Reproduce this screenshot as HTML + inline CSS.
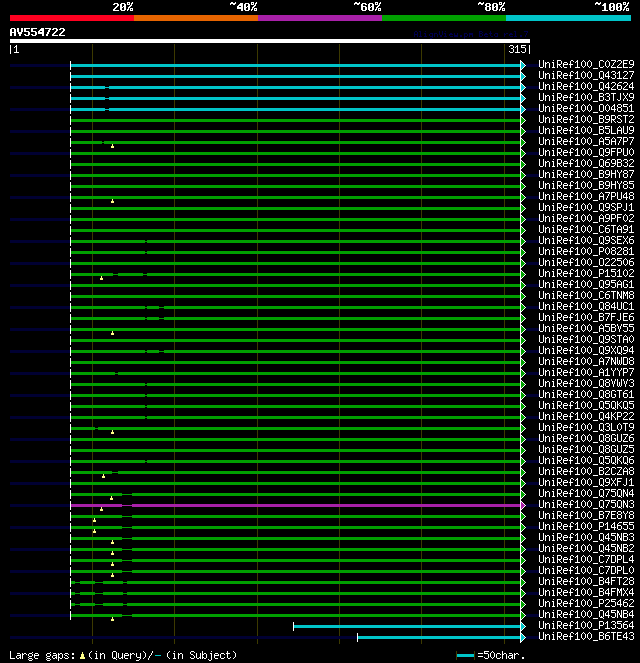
<!DOCTYPE html>
<html><head><meta charset="utf-8"><title>AlignView</title>
<style>
html,body{margin:0;padding:0;background:#000;}
svg{display:block}
body{font-family:"Liberation Mono",monospace;color:#fff}
rect,path,use{shape-rendering:crispEdges}
use{fill:#fff}
.c{fill:#00c4c8}.g{fill:#00a000}.p{fill:#a820a8}
</style></head><body>
<svg width="640" height="663" viewBox="0 0 640 663">
<rect x="0" y="0" width="640" height="663" fill="#000"/>
<defs><path id="tw" d="M520 -5h1v1h-1zM520 -4h1v1h-1zM520 -3h1v1h-1zM520 -2h1v1h-1zM520 -1h1v1h-1zM520 0h1v1h-1zM520 1h1v1h-1zM520 2h1v1h-1zM520 3h1v1h-1zM520 4h1v1h-1zM520 5h1v1h-1zM521 -4h1v1h-1zM521 4h1v1h-1zM522 -3h1v1h-1zM522 3h1v1h-1zM523 -2h1v1h-1zM523 2h1v1h-1zM524 -1h1v1h-1zM524 1h1v1h-1zM525 0h1v1h-1z"/><path id="tf" d="M521 -3h1v1h-1zM521 -2h2v1h-2zM521 -1h3v1h-3zM521 0h4v1h-4zM521 1h3v1h-3zM521 2h2v1h-2zM521 3h1v1h-1z"/>
<path id="uni" d="M0 0h1v1h-1zM4 0h1v1h-1zM0 1h1v1h-1zM4 1h1v1h-1zM0 2h1v1h-1zM4 2h1v1h-1zM0 3h1v1h-1zM4 3h1v1h-1zM0 4h1v1h-1zM4 4h1v1h-1zM0 5h1v1h-1zM4 5h1v1h-1zM0 6h1v1h-1zM4 6h1v1h-1zM1 7h3v1h-3zM6 2h1v1h-1zM8 2h2v1h-2zM6 3h2v1h-2zM10 3h1v1h-1zM6 4h1v1h-1zM10 4h1v1h-1zM6 5h1v1h-1zM10 5h1v1h-1zM6 6h1v1h-1zM10 6h1v1h-1zM6 7h1v1h-1zM10 7h1v1h-1zM14 0h1v1h-1zM13 2h2v1h-2zM14 3h1v1h-1zM14 4h1v1h-1zM14 5h1v1h-1zM14 6h1v1h-1zM13 7h3v1h-3zM18 0h4v1h-4zM18 1h1v1h-1zM22 1h1v1h-1zM18 2h1v1h-1zM22 2h1v1h-1zM18 3h1v1h-1zM22 3h1v1h-1zM18 4h4v1h-4zM18 5h1v1h-1zM20 5h1v1h-1zM18 6h1v1h-1zM21 6h1v1h-1zM18 7h1v1h-1zM22 7h1v1h-1zM25 2h3v1h-3zM24 3h1v1h-1zM28 3h1v1h-1zM24 4h5v1h-5zM24 5h1v1h-1zM24 6h1v1h-1zM25 7h3v1h-3zM32 0h2v1h-2zM31 1h1v1h-1zM34 1h1v1h-1zM31 2h1v1h-1zM31 3h1v1h-1zM30 4h4v1h-4zM31 5h1v1h-1zM31 6h1v1h-1zM31 7h1v1h-1zM38 0h1v1h-1zM37 1h2v1h-2zM36 2h1v1h-1zM38 2h1v1h-1zM38 3h1v1h-1zM38 4h1v1h-1zM38 5h1v1h-1zM38 6h1v1h-1zM36 7h5v1h-5zM44 0h1v1h-1zM43 1h1v1h-1zM45 1h1v1h-1zM42 2h1v1h-1zM46 2h1v1h-1zM42 3h1v1h-1zM46 3h1v1h-1zM42 4h1v1h-1zM46 4h1v1h-1zM42 5h1v1h-1zM46 5h1v1h-1zM43 6h1v1h-1zM45 6h1v1h-1zM44 7h1v1h-1zM50 0h1v1h-1zM49 1h1v1h-1zM51 1h1v1h-1zM48 2h1v1h-1zM52 2h1v1h-1zM48 3h1v1h-1zM52 3h1v1h-1zM48 4h1v1h-1zM52 4h1v1h-1zM48 5h1v1h-1zM52 5h1v1h-1zM49 6h1v1h-1zM51 6h1v1h-1zM50 7h1v1h-1zM54 8h5v1h-5z"/>
<path id="s28" d="M3 0h1v1h-1zM2 1h1v1h-1zM1 2h1v1h-1zM1 3h1v1h-1zM1 4h1v1h-1zM1 5h1v1h-1zM2 6h1v1h-1zM3 7h1v1h-1z"/>
<path id="s29" d="M1 0h1v1h-1zM2 1h1v1h-1zM3 2h1v1h-1zM3 3h1v1h-1zM3 4h1v1h-1zM3 5h1v1h-1zM2 6h1v1h-1zM1 7h1v1h-1z"/>
<path id="s2e" d="M2 6h2v1h-2zM2 7h2v1h-2z"/>
<path id="s2f" d="M4 0h1v1h-1zM4 1h1v1h-1zM3 2h1v1h-1zM3 3h1v1h-1zM2 4h1v1h-1zM1 5h1v1h-1zM1 6h1v1h-1zM0 7h1v1h-1zM0 8h1v1h-1z"/>
<path id="s30" d="M2 0h1v1h-1zM1 1h1v1h-1zM3 1h1v1h-1zM0 2h1v1h-1zM4 2h1v1h-1zM0 3h1v1h-1zM4 3h1v1h-1zM0 4h1v1h-1zM4 4h1v1h-1zM0 5h1v1h-1zM4 5h1v1h-1zM1 6h1v1h-1zM3 6h1v1h-1zM2 7h1v1h-1z"/>
<path id="s31" d="M2 0h1v1h-1zM1 1h2v1h-2zM0 2h1v1h-1zM2 2h1v1h-1zM2 3h1v1h-1zM2 4h1v1h-1zM2 5h1v1h-1zM2 6h1v1h-1zM0 7h5v1h-5z"/>
<path id="s32" d="M1 0h3v1h-3zM0 1h1v1h-1zM4 1h1v1h-1zM4 2h1v1h-1zM3 3h1v1h-1zM2 4h1v1h-1zM1 5h1v1h-1zM0 6h1v1h-1zM0 7h5v1h-5z"/>
<path id="s33" d="M1 0h3v1h-3zM0 1h1v1h-1zM4 1h1v1h-1zM4 2h1v1h-1zM2 3h2v1h-2zM4 4h1v1h-1zM4 5h1v1h-1zM0 6h1v1h-1zM4 6h1v1h-1zM1 7h3v1h-3z"/>
<path id="s34" d="M3 0h1v1h-1zM2 1h2v1h-2zM1 2h1v1h-1zM3 2h1v1h-1zM0 3h1v1h-1zM3 3h1v1h-1zM0 4h1v1h-1zM3 4h1v1h-1zM0 5h5v1h-5zM3 6h1v1h-1zM3 7h1v1h-1z"/>
<path id="s35" d="M0 0h5v1h-5zM0 1h1v1h-1zM0 2h4v1h-4zM4 3h1v1h-1zM4 4h1v1h-1zM4 5h1v1h-1zM0 6h1v1h-1zM4 6h1v1h-1zM1 7h3v1h-3z"/>
<path id="s36" d="M2 0h3v1h-3zM1 1h1v1h-1zM0 2h1v1h-1zM0 3h4v1h-4zM0 4h1v1h-1zM4 4h1v1h-1zM0 5h1v1h-1zM4 5h1v1h-1zM0 6h1v1h-1zM4 6h1v1h-1zM1 7h3v1h-3z"/>
<path id="s37" d="M0 0h5v1h-5zM4 1h1v1h-1zM3 2h1v1h-1zM3 3h1v1h-1zM2 4h1v1h-1zM2 5h1v1h-1zM1 6h1v1h-1zM1 7h1v1h-1z"/>
<path id="s38" d="M1 0h3v1h-3zM0 1h1v1h-1zM4 1h1v1h-1zM0 2h1v1h-1zM4 2h1v1h-1zM1 3h3v1h-3zM0 4h1v1h-1zM4 4h1v1h-1zM0 5h1v1h-1zM4 5h1v1h-1zM0 6h1v1h-1zM4 6h1v1h-1zM1 7h3v1h-3z"/>
<path id="s39" d="M1 0h3v1h-3zM0 1h1v1h-1zM4 1h1v1h-1zM0 2h1v1h-1zM4 2h1v1h-1zM0 3h1v1h-1zM4 3h1v1h-1zM1 4h4v1h-4zM4 5h1v1h-1zM3 6h1v1h-1zM0 7h3v1h-3z"/>
<path id="s3a" d="M2 2h2v1h-2zM2 3h2v1h-2zM2 6h2v1h-2zM2 7h2v1h-2z"/>
<path id="s3d" d="M0 2h5v1h-5zM0 5h5v1h-5z"/>
<path id="s41" d="M2 0h1v1h-1zM1 1h1v1h-1zM3 1h1v1h-1zM0 2h1v1h-1zM4 2h1v1h-1zM0 3h1v1h-1zM4 3h1v1h-1zM0 4h5v1h-5zM0 5h1v1h-1zM4 5h1v1h-1zM0 6h1v1h-1zM4 6h1v1h-1zM0 7h1v1h-1zM4 7h1v1h-1z"/>
<path id="s42" d="M0 0h4v1h-4zM0 1h1v1h-1zM4 1h1v1h-1zM0 2h1v1h-1zM4 2h1v1h-1zM0 3h4v1h-4zM0 4h1v1h-1zM4 4h1v1h-1zM0 5h1v1h-1zM4 5h1v1h-1zM0 6h1v1h-1zM4 6h1v1h-1zM0 7h4v1h-4z"/>
<path id="s43" d="M1 0h3v1h-3zM0 1h1v1h-1zM4 1h1v1h-1zM0 2h1v1h-1zM0 3h1v1h-1zM0 4h1v1h-1zM0 5h1v1h-1zM0 6h1v1h-1zM4 6h1v1h-1zM1 7h3v1h-3z"/>
<path id="s44" d="M0 0h4v1h-4zM0 1h1v1h-1zM4 1h1v1h-1zM0 2h1v1h-1zM4 2h1v1h-1zM0 3h1v1h-1zM4 3h1v1h-1zM0 4h1v1h-1zM4 4h1v1h-1zM0 5h1v1h-1zM4 5h1v1h-1zM0 6h1v1h-1zM4 6h1v1h-1zM0 7h4v1h-4z"/>
<path id="s45" d="M0 0h5v1h-5zM0 1h1v1h-1zM0 2h1v1h-1zM0 3h4v1h-4zM0 4h1v1h-1zM0 5h1v1h-1zM0 6h1v1h-1zM0 7h5v1h-5z"/>
<path id="s46" d="M0 0h5v1h-5zM0 1h1v1h-1zM0 2h1v1h-1zM0 3h4v1h-4zM0 4h1v1h-1zM0 5h1v1h-1zM0 6h1v1h-1zM0 7h1v1h-1z"/>
<path id="s47" d="M1 0h3v1h-3zM0 1h1v1h-1zM4 1h1v1h-1zM0 2h1v1h-1zM0 3h1v1h-1zM0 4h1v1h-1zM3 4h2v1h-2zM0 5h1v1h-1zM4 5h1v1h-1zM0 6h1v1h-1zM4 6h1v1h-1zM1 7h3v1h-3z"/>
<path id="s48" d="M0 0h1v1h-1zM4 0h1v1h-1zM0 1h1v1h-1zM4 1h1v1h-1zM0 2h1v1h-1zM4 2h1v1h-1zM0 3h5v1h-5zM0 4h1v1h-1zM4 4h1v1h-1zM0 5h1v1h-1zM4 5h1v1h-1zM0 6h1v1h-1zM4 6h1v1h-1zM0 7h1v1h-1zM4 7h1v1h-1z"/>
<path id="s4a" d="M3 0h1v1h-1zM3 1h1v1h-1zM3 2h1v1h-1zM3 3h1v1h-1zM3 4h1v1h-1zM3 5h1v1h-1zM0 6h1v1h-1zM3 6h1v1h-1zM1 7h2v1h-2z"/>
<path id="s4b" d="M0 0h1v1h-1zM4 0h1v1h-1zM0 1h1v1h-1zM3 1h1v1h-1zM0 2h1v1h-1zM2 2h1v1h-1zM0 3h2v1h-2zM0 4h1v1h-1zM2 4h1v1h-1zM0 5h1v1h-1zM3 5h1v1h-1zM0 6h1v1h-1zM4 6h1v1h-1zM0 7h1v1h-1zM4 7h1v1h-1z"/>
<path id="s4c" d="M0 0h1v1h-1zM0 1h1v1h-1zM0 2h1v1h-1zM0 3h1v1h-1zM0 4h1v1h-1zM0 5h1v1h-1zM0 6h1v1h-1zM0 7h5v1h-5z"/>
<path id="s4d" d="M0 0h1v1h-1zM4 0h1v1h-1zM0 1h2v1h-2zM3 1h2v1h-2zM0 2h2v1h-2zM3 2h2v1h-2zM0 3h1v1h-1zM2 3h1v1h-1zM4 3h1v1h-1zM0 4h1v1h-1zM2 4h1v1h-1zM4 4h1v1h-1zM0 5h1v1h-1zM4 5h1v1h-1zM0 6h1v1h-1zM4 6h1v1h-1zM0 7h1v1h-1zM4 7h1v1h-1z"/>
<path id="s4e" d="M0 0h1v1h-1zM4 0h1v1h-1zM0 1h2v1h-2zM4 1h1v1h-1zM0 2h2v1h-2zM4 2h1v1h-1zM0 3h1v1h-1zM2 3h1v1h-1zM4 3h1v1h-1zM0 4h1v1h-1zM2 4h1v1h-1zM4 4h1v1h-1zM0 5h1v1h-1zM3 5h2v1h-2zM0 6h1v1h-1zM3 6h2v1h-2zM0 7h1v1h-1zM4 7h1v1h-1z"/>
<path id="s4f" d="M1 0h3v1h-3zM0 1h1v1h-1zM4 1h1v1h-1zM0 2h1v1h-1zM4 2h1v1h-1zM0 3h1v1h-1zM4 3h1v1h-1zM0 4h1v1h-1zM4 4h1v1h-1zM0 5h1v1h-1zM4 5h1v1h-1zM0 6h1v1h-1zM4 6h1v1h-1zM1 7h3v1h-3z"/>
<path id="s50" d="M0 0h4v1h-4zM0 1h1v1h-1zM4 1h1v1h-1zM0 2h1v1h-1zM4 2h1v1h-1zM0 3h1v1h-1zM4 3h1v1h-1zM0 4h4v1h-4zM0 5h1v1h-1zM0 6h1v1h-1zM0 7h1v1h-1z"/>
<path id="s51" d="M1 0h3v1h-3zM0 1h1v1h-1zM4 1h1v1h-1zM0 2h1v1h-1zM4 2h1v1h-1zM0 3h1v1h-1zM4 3h1v1h-1zM0 4h1v1h-1zM4 4h1v1h-1zM0 5h1v1h-1zM4 5h1v1h-1zM0 6h1v1h-1zM2 6h1v1h-1zM4 6h1v1h-1zM1 7h3v1h-3zM4 8h1v1h-1z"/>
<path id="s52" d="M0 0h4v1h-4zM0 1h1v1h-1zM4 1h1v1h-1zM0 2h1v1h-1zM4 2h1v1h-1zM0 3h1v1h-1zM4 3h1v1h-1zM0 4h4v1h-4zM0 5h1v1h-1zM2 5h1v1h-1zM0 6h1v1h-1zM3 6h1v1h-1zM0 7h1v1h-1zM4 7h1v1h-1z"/>
<path id="s53" d="M1 0h3v1h-3zM0 1h1v1h-1zM4 1h1v1h-1zM0 2h1v1h-1zM1 3h2v1h-2zM3 4h1v1h-1zM4 5h1v1h-1zM0 6h1v1h-1zM4 6h1v1h-1zM1 7h3v1h-3z"/>
<path id="s54" d="M0 0h5v1h-5zM2 1h1v1h-1zM2 2h1v1h-1zM2 3h1v1h-1zM2 4h1v1h-1zM2 5h1v1h-1zM2 6h1v1h-1zM2 7h1v1h-1z"/>
<path id="s55" d="M0 0h1v1h-1zM4 0h1v1h-1zM0 1h1v1h-1zM4 1h1v1h-1zM0 2h1v1h-1zM4 2h1v1h-1zM0 3h1v1h-1zM4 3h1v1h-1zM0 4h1v1h-1zM4 4h1v1h-1zM0 5h1v1h-1zM4 5h1v1h-1zM0 6h1v1h-1zM4 6h1v1h-1zM1 7h3v1h-3z"/>
<path id="s56" d="M0 0h1v1h-1zM4 0h1v1h-1zM0 1h1v1h-1zM4 1h1v1h-1zM1 2h1v1h-1zM3 2h1v1h-1zM1 3h1v1h-1zM3 3h1v1h-1zM1 4h1v1h-1zM3 4h1v1h-1zM2 5h1v1h-1zM2 6h1v1h-1zM2 7h1v1h-1z"/>
<path id="s57" d="M0 0h1v1h-1zM4 0h1v1h-1zM0 1h1v1h-1zM4 1h1v1h-1zM0 2h1v1h-1zM4 2h1v1h-1zM0 3h1v1h-1zM2 3h1v1h-1zM4 3h1v1h-1zM0 4h1v1h-1zM2 4h1v1h-1zM4 4h1v1h-1zM0 5h1v1h-1zM2 5h1v1h-1zM4 5h1v1h-1zM0 6h1v1h-1zM2 6h1v1h-1zM4 6h1v1h-1zM1 7h1v1h-1zM3 7h1v1h-1z"/>
<path id="s58" d="M0 0h1v1h-1zM4 0h1v1h-1zM0 1h1v1h-1zM4 1h1v1h-1zM1 2h1v1h-1zM3 2h1v1h-1zM2 3h1v1h-1zM2 4h1v1h-1zM1 5h1v1h-1zM3 5h1v1h-1zM0 6h1v1h-1zM4 6h1v1h-1zM0 7h1v1h-1zM4 7h1v1h-1z"/>
<path id="s59" d="M0 0h1v1h-1zM4 0h1v1h-1zM0 1h1v1h-1zM4 1h1v1h-1zM1 2h1v1h-1zM3 2h1v1h-1zM2 3h1v1h-1zM2 4h1v1h-1zM2 5h1v1h-1zM2 6h1v1h-1zM2 7h1v1h-1z"/>
<path id="s5a" d="M0 0h5v1h-5zM4 1h1v1h-1zM3 2h1v1h-1zM2 3h1v1h-1zM2 4h1v1h-1zM1 5h1v1h-1zM0 6h1v1h-1zM0 7h5v1h-5z"/>
<path id="s61" d="M1 2h3v1h-3zM4 3h1v1h-1zM1 4h4v1h-4zM0 5h1v1h-1zM4 5h1v1h-1zM0 6h1v1h-1zM3 6h2v1h-2zM1 7h2v1h-2zM4 7h1v1h-1z"/>
<path id="s62" d="M0 0h1v1h-1zM0 1h1v1h-1zM0 2h1v1h-1zM2 2h2v1h-2zM0 3h2v1h-2zM4 3h1v1h-1zM0 4h1v1h-1zM4 4h1v1h-1zM0 5h1v1h-1zM4 5h1v1h-1zM0 6h2v1h-2zM4 6h1v1h-1zM0 7h1v1h-1zM2 7h2v1h-2z"/>
<path id="s63" d="M1 2h3v1h-3zM0 3h1v1h-1zM4 3h1v1h-1zM0 4h1v1h-1zM0 5h1v1h-1zM0 6h1v1h-1zM4 6h1v1h-1zM1 7h3v1h-3z"/>
<path id="s65" d="M1 2h3v1h-3zM0 3h1v1h-1zM4 3h1v1h-1zM0 4h5v1h-5zM0 5h1v1h-1zM0 6h1v1h-1zM1 7h3v1h-3z"/>
<path id="s67" d="M4 1h1v1h-1zM1 2h3v1h-3zM0 3h1v1h-1zM4 3h1v1h-1zM0 4h1v1h-1zM4 4h1v1h-1zM1 5h3v1h-3zM0 6h1v1h-1zM1 7h3v1h-3zM0 8h1v1h-1zM4 8h1v1h-1zM1 9h3v1h-3z"/>
<path id="s68" d="M0 0h1v1h-1zM0 1h1v1h-1zM0 2h1v1h-1zM2 2h2v1h-2zM0 3h2v1h-2zM4 3h1v1h-1zM0 4h1v1h-1zM4 4h1v1h-1zM0 5h1v1h-1zM4 5h1v1h-1zM0 6h1v1h-1zM4 6h1v1h-1zM0 7h1v1h-1zM4 7h1v1h-1z"/>
<path id="s69" d="M2 0h1v1h-1zM1 2h2v1h-2zM2 3h1v1h-1zM2 4h1v1h-1zM2 5h1v1h-1zM2 6h1v1h-1zM1 7h3v1h-3z"/>
<path id="s6a" d="M3 0h1v1h-1zM2 2h2v1h-2zM3 3h1v1h-1zM3 4h1v1h-1zM3 5h1v1h-1zM3 6h1v1h-1zM3 7h1v1h-1zM0 8h1v1h-1zM3 8h1v1h-1zM1 9h2v1h-2z"/>
<path id="s6e" d="M0 2h1v1h-1zM2 2h2v1h-2zM0 3h2v1h-2zM4 3h1v1h-1zM0 4h1v1h-1zM4 4h1v1h-1zM0 5h1v1h-1zM4 5h1v1h-1zM0 6h1v1h-1zM4 6h1v1h-1zM0 7h1v1h-1zM4 7h1v1h-1z"/>
<path id="s70" d="M0 2h1v1h-1zM2 2h2v1h-2zM0 3h2v1h-2zM4 3h1v1h-1zM0 4h1v1h-1zM4 4h1v1h-1zM0 5h1v1h-1zM4 5h1v1h-1zM0 6h2v1h-2zM4 6h1v1h-1zM0 7h1v1h-1zM2 7h2v1h-2zM0 8h1v1h-1zM0 9h1v1h-1z"/>
<path id="s72" d="M0 2h1v1h-1zM2 2h2v1h-2zM0 3h2v1h-2zM4 3h1v1h-1zM0 4h1v1h-1zM0 5h1v1h-1zM0 6h1v1h-1zM0 7h1v1h-1z"/>
<path id="s73" d="M1 2h3v1h-3zM0 3h1v1h-1zM4 3h1v1h-1zM1 4h2v1h-2zM3 5h1v1h-1zM0 6h1v1h-1zM4 6h1v1h-1zM1 7h3v1h-3z"/>
<path id="s74" d="M1 0h1v1h-1zM1 1h1v1h-1zM0 2h4v1h-4zM1 3h1v1h-1zM1 4h1v1h-1zM1 5h1v1h-1zM1 6h1v1h-1zM4 6h1v1h-1zM2 7h2v1h-2z"/>
<path id="s75" d="M0 2h1v1h-1zM4 2h1v1h-1zM0 3h1v1h-1zM4 3h1v1h-1zM0 4h1v1h-1zM4 4h1v1h-1zM0 5h1v1h-1zM4 5h1v1h-1zM0 6h1v1h-1zM3 6h2v1h-2zM1 7h2v1h-2zM4 7h1v1h-1z"/>
<path id="s79" d="M0 2h1v1h-1zM4 2h1v1h-1zM0 3h1v1h-1zM4 3h1v1h-1zM0 4h1v1h-1zM4 4h1v1h-1zM0 5h1v1h-1zM4 5h1v1h-1zM1 6h4v1h-4zM4 7h1v1h-1zM3 8h1v1h-1zM0 9h3v1h-3z"/>
<path id="s7c" d="M2 0h1v1h-1zM2 1h1v1h-1zM2 2h1v1h-1zM2 3h1v1h-1zM2 4h1v1h-1zM2 5h1v1h-1zM2 6h1v1h-1zM2 7h1v1h-1zM2 8h1v1h-1z"/>
<path id="b25" d="M0 -1h3v1h-3zM5 -1h1v1h-1zM0 0h1v1h-1zM2 0h1v1h-1zM4 0h2v1h-2zM0 1h3v1h-3zM4 1h1v1h-1zM3 2h2v1h-2zM2 3h2v1h-2zM1 4h2v1h-2zM1 5h1v1h-1zM3 5h3v1h-3zM0 6h2v1h-2zM3 6h1v1h-1zM5 6h1v1h-1zM0 7h1v1h-1zM3 7h3v1h-3z"/>
<path id="b30" d="M1 0h4v1h-4zM0 1h2v1h-2zM4 1h2v1h-2zM0 2h2v1h-2zM4 2h2v1h-2zM0 3h2v1h-2zM3 3h3v1h-3zM0 4h3v1h-3zM4 4h2v1h-2zM0 5h2v1h-2zM4 5h2v1h-2zM0 6h2v1h-2zM4 6h2v1h-2zM1 7h4v1h-4z"/>
<path id="b31" d="M2 0h2v1h-2zM1 1h3v1h-3zM0 2h4v1h-4zM2 3h2v1h-2zM2 4h2v1h-2zM2 5h2v1h-2zM2 6h2v1h-2zM0 7h6v1h-6z"/>
<path id="b32" d="M1 0h4v1h-4zM0 1h2v1h-2zM4 1h2v1h-2zM4 2h2v1h-2zM3 3h2v1h-2zM2 4h2v1h-2zM1 5h2v1h-2zM0 6h2v1h-2zM0 7h6v1h-6z"/>
<path id="b34" d="M3 0h3v1h-3zM2 1h4v1h-4zM1 2h5v1h-5zM0 3h2v1h-2zM4 3h2v1h-2zM0 4h6v1h-6zM0 5h6v1h-6zM4 6h2v1h-2zM4 7h2v1h-2z"/>
<path id="b35" d="M0 0h6v1h-6zM0 1h2v1h-2zM0 2h2v1h-2zM0 3h5v1h-5zM4 4h2v1h-2zM4 5h2v1h-2zM0 6h2v1h-2zM4 6h2v1h-2zM1 7h4v1h-4z"/>
<path id="b36" d="M1 0h4v1h-4zM0 1h2v1h-2zM4 1h2v1h-2zM0 2h2v1h-2zM0 3h5v1h-5zM0 4h2v1h-2zM4 4h2v1h-2zM0 5h2v1h-2zM4 5h2v1h-2zM0 6h2v1h-2zM4 6h2v1h-2zM1 7h4v1h-4z"/>
<path id="b37" d="M0 0h6v1h-6zM4 1h2v1h-2zM3 2h2v1h-2zM3 3h2v1h-2zM2 4h2v1h-2zM2 5h2v1h-2zM1 6h2v1h-2zM1 7h2v1h-2z"/>
<path id="b38" d="M1 0h4v1h-4zM0 1h2v1h-2zM4 1h2v1h-2zM0 2h2v1h-2zM4 2h2v1h-2zM1 3h4v1h-4zM0 4h2v1h-2zM4 4h2v1h-2zM0 5h2v1h-2zM4 5h2v1h-2zM0 6h2v1h-2zM4 6h2v1h-2zM1 7h4v1h-4z"/>
<path id="b41" d="M1 0h4v1h-4zM0 1h2v1h-2zM4 1h2v1h-2zM0 2h2v1h-2zM4 2h2v1h-2zM0 3h2v1h-2zM4 3h2v1h-2zM0 4h6v1h-6zM0 5h2v1h-2zM4 5h2v1h-2zM0 6h2v1h-2zM4 6h2v1h-2zM0 7h2v1h-2zM4 7h2v1h-2z"/>
<path id="b56" d="M0 0h2v1h-2zM4 0h2v1h-2zM0 1h2v1h-2zM4 1h2v1h-2zM0 2h2v1h-2zM4 2h2v1h-2zM0 3h2v1h-2zM4 3h2v1h-2zM1 4h4v1h-4zM1 5h4v1h-4zM2 6h2v1h-2zM2 7h2v1h-2z"/>
<path id="b7e" d="M1 -1h2v1h-2zM5 -1h1v1h-1zM0 0h6v1h-6zM0 1h1v1h-1zM3 1h2v1h-2z"/></defs>
<rect x="10" y="15" width="124" height="6" fill="#ff0020"/>
<rect x="134" y="15" width="124" height="6" fill="#e66400"/>
<rect x="258" y="15" width="124" height="6" fill="#a820a8"/>
<rect x="382" y="15" width="124" height="6" fill="#00a000"/>
<rect x="506" y="15" width="125" height="6" fill="#00c4c8"/>
<use href="#b32" x="113" y="3"/>
<use href="#b30" x="120" y="3"/>
<use href="#b25" x="127" y="3"/>
<use href="#b7e" x="230" y="3"/>
<use href="#b34" x="237" y="3"/>
<use href="#b30" x="244" y="3"/>
<use href="#b25" x="251" y="3"/>
<use href="#b7e" x="354" y="3"/>
<use href="#b36" x="361" y="3"/>
<use href="#b30" x="368" y="3"/>
<use href="#b25" x="375" y="3"/>
<use href="#b7e" x="478" y="3"/>
<use href="#b38" x="485" y="3"/>
<use href="#b30" x="492" y="3"/>
<use href="#b25" x="499" y="3"/>
<use href="#b7e" x="595" y="3"/>
<use href="#b31" x="602" y="3"/>
<use href="#b30" x="609" y="3"/>
<use href="#b30" x="616" y="3"/>
<use href="#b25" x="623" y="3"/>
<use href="#b41" x="10" y="28"/>
<use href="#b56" x="17" y="28"/>
<use href="#b35" x="24" y="28"/>
<use href="#b35" x="31" y="28"/>
<use href="#b34" x="38" y="28"/>
<use href="#b37" x="45" y="28"/>
<use href="#b32" x="52" y="28"/>
<use href="#b32" x="59" y="28"/>
<path d="M415 31h2v1h-2zM414 32h1v1h-1zM417 32h1v1h-1zM414 33h1v1h-1zM417 33h1v1h-1zM414 34h4v1h-4zM414 35h1v1h-1zM417 35h1v1h-1zM414 36h1v1h-1zM417 36h1v1h-1zM419 31h2v1h-2zM420 32h1v1h-1zM420 33h1v1h-1zM420 34h1v1h-1zM420 35h1v1h-1zM419 36h3v1h-3zM425 31h1v1h-1zM424 33h2v1h-2zM425 34h1v1h-1zM425 35h1v1h-1zM424 36h3v1h-3zM430 33h3v1h-3zM429 34h1v1h-1zM432 34h1v1h-1zM429 35h1v1h-1zM432 35h1v1h-1zM430 36h3v1h-3zM432 37h1v1h-1zM430 38h2v1h-2zM434 33h3v1h-3zM434 34h1v1h-1zM437 34h1v1h-1zM434 35h1v1h-1zM437 35h1v1h-1zM434 36h1v1h-1zM437 36h1v1h-1zM439 31h1v1h-1zM442 31h1v1h-1zM439 32h1v1h-1zM442 32h1v1h-1zM439 33h1v1h-1zM442 33h1v1h-1zM439 34h1v1h-1zM442 34h1v1h-1zM440 35h2v1h-2zM440 36h2v1h-2zM445 31h1v1h-1zM444 33h2v1h-2zM445 34h1v1h-1zM445 35h1v1h-1zM444 36h3v1h-3zM450 33h2v1h-2zM449 34h4v1h-4zM449 35h1v1h-1zM450 36h3v1h-3zM454 33h1v1h-1zM457 33h1v1h-1zM454 34h1v1h-1zM457 34h1v1h-1zM454 35h4v1h-4zM454 36h4v1h-4zM460 35h2v1h-2zM460 36h2v1h-2zM464 33h3v1h-3zM464 34h1v1h-1zM467 34h1v1h-1zM464 35h1v1h-1zM467 35h1v1h-1zM464 36h3v1h-3zM464 37h1v1h-1zM464 38h1v1h-1zM469 33h4v1h-4zM469 34h4v1h-4zM469 35h1v1h-1zM472 35h1v1h-1zM469 36h1v1h-1zM472 36h1v1h-1zM479 31h3v1h-3zM479 32h1v1h-1zM482 32h1v1h-1zM479 33h3v1h-3zM479 34h1v1h-1zM482 34h1v1h-1zM479 35h1v1h-1zM482 35h1v1h-1zM479 36h3v1h-3zM485 33h2v1h-2zM484 34h4v1h-4zM484 35h1v1h-1zM485 36h3v1h-3zM490 31h1v1h-1zM490 32h1v1h-1zM489 33h3v1h-3zM490 34h1v1h-1zM490 35h1v1h-1zM491 36h2v1h-2zM495 33h3v1h-3zM494 34h1v1h-1zM497 34h1v1h-1zM494 35h1v1h-1zM497 35h1v1h-1zM495 36h3v1h-3zM504 33h1v1h-1zM506 33h2v1h-2zM504 34h2v1h-2zM504 35h1v1h-1zM504 36h1v1h-1zM510 33h2v1h-2zM509 34h4v1h-4zM509 35h1v1h-1zM510 36h3v1h-3zM514 31h2v1h-2zM515 32h1v1h-1zM515 33h1v1h-1zM515 34h1v1h-1zM515 35h1v1h-1zM514 36h3v1h-3zM520 35h2v1h-2zM520 36h2v1h-2zM524 31h4v1h-4zM527 32h1v1h-1zM526 33h1v1h-1zM526 34h1v1h-1zM525 35h1v1h-1zM525 36h1v1h-1z" fill="#00004c"/>
<rect x="10" y="39" width="520" height="4" fill="#fff"/>
<use href="#s7c" x="8" y="45"/>
<use href="#s31" x="14" y="45"/>
<use href="#s33" x="509" y="45"/>
<use href="#s31" x="515" y="45"/>
<use href="#s35" x="521" y="45"/>
<use href="#s7c" x="527" y="45"/>
<rect x="92" y="44" width="1" height="600" fill="#3c3900"/>
<rect x="174" y="44" width="1" height="600" fill="#3c3900"/>
<rect x="257" y="44" width="1" height="600" fill="#3c3900"/>
<rect x="339" y="44" width="1" height="600" fill="#3c3900"/>
<rect x="421" y="44" width="1" height="600" fill="#3c3900"/>
<rect x="504" y="44" width="1" height="600" fill="#3c3900"/>
<rect x="10" y="64" width="60" height="3" fill="#000032"/>
<rect x="526" y="64" width="13" height="3" fill="#000032"/>
<rect x="71" y="64" width="449" height="3" fill="#00c4c8"/>
<rect x="70" y="61" width="1" height="9" fill="#fff"/>
<use href="#tf" y="65" class="c"/><use href="#tw" y="65"/>
<use href="#uni" x="539" y="60"/>
<use href="#s43" x="599" y="60"/>
<use href="#s30" x="605" y="60"/>
<use href="#s5a" x="611" y="60"/>
<use href="#s32" x="617" y="60"/>
<use href="#s45" x="623" y="60"/>
<use href="#s39" x="629" y="60"/>
<rect x="71" y="75" width="449" height="3" fill="#00c4c8"/>
<rect x="70" y="72" width="1" height="9" fill="#fff"/>
<use href="#tf" y="76" class="c"/><use href="#tw" y="76"/>
<use href="#uni" x="539" y="71"/>
<use href="#s51" x="599" y="71"/>
<use href="#s34" x="605" y="71"/>
<use href="#s33" x="611" y="71"/>
<use href="#s31" x="617" y="71"/>
<use href="#s32" x="623" y="71"/>
<use href="#s37" x="629" y="71"/>
<rect x="10" y="86" width="60" height="3" fill="#000032"/>
<rect x="526" y="86" width="13" height="3" fill="#000032"/>
<rect x="71" y="86" width="34" height="3" fill="#00c4c8"/>
<rect x="105" y="87" width="4" height="1" fill="#00c4c8"/>
<rect x="109" y="86" width="411" height="3" fill="#00c4c8"/>
<rect x="70" y="83" width="1" height="9" fill="#fff"/>
<use href="#tf" y="87" class="c"/><use href="#tw" y="87"/>
<use href="#uni" x="539" y="82"/>
<use href="#s51" x="599" y="82"/>
<use href="#s34" x="605" y="82"/>
<use href="#s32" x="611" y="82"/>
<use href="#s36" x="617" y="82"/>
<use href="#s32" x="623" y="82"/>
<use href="#s34" x="629" y="82"/>
<rect x="71" y="97" width="34" height="3" fill="#00c4c8"/>
<rect x="105" y="98" width="4" height="1" fill="#00c4c8"/>
<rect x="109" y="97" width="411" height="3" fill="#00c4c8"/>
<rect x="70" y="94" width="1" height="9" fill="#fff"/>
<use href="#tf" y="98" class="c"/><use href="#tw" y="98"/>
<use href="#uni" x="539" y="93"/>
<use href="#s42" x="599" y="93"/>
<use href="#s33" x="605" y="93"/>
<use href="#s54" x="611" y="93"/>
<use href="#s4a" x="617" y="93"/>
<use href="#s58" x="623" y="93"/>
<use href="#s39" x="629" y="93"/>
<rect x="10" y="108" width="60" height="3" fill="#000032"/>
<rect x="526" y="108" width="13" height="3" fill="#000032"/>
<rect x="71" y="108" width="34" height="3" fill="#00c4c8"/>
<rect x="105" y="109" width="4" height="1" fill="#00c4c8"/>
<rect x="109" y="108" width="411" height="3" fill="#00c4c8"/>
<rect x="70" y="105" width="1" height="9" fill="#fff"/>
<use href="#tf" y="109" class="c"/><use href="#tw" y="109"/>
<use href="#uni" x="539" y="104"/>
<use href="#s4f" x="599" y="104"/>
<use href="#s30" x="605" y="104"/>
<use href="#s34" x="611" y="104"/>
<use href="#s38" x="617" y="104"/>
<use href="#s35" x="623" y="104"/>
<use href="#s31" x="629" y="104"/>
<rect x="71" y="119" width="449" height="3" fill="#00a000"/>
<rect x="70" y="116" width="1" height="9" fill="#fff"/>
<use href="#tf" y="120" class="g"/><use href="#tw" y="120"/>
<use href="#uni" x="539" y="115"/>
<use href="#s42" x="599" y="115"/>
<use href="#s39" x="605" y="115"/>
<use href="#s52" x="611" y="115"/>
<use href="#s53" x="617" y="115"/>
<use href="#s54" x="623" y="115"/>
<use href="#s32" x="629" y="115"/>
<rect x="10" y="130" width="60" height="3" fill="#000032"/>
<rect x="526" y="130" width="13" height="3" fill="#000032"/>
<rect x="71" y="130" width="449" height="3" fill="#00a000"/>
<rect x="70" y="127" width="1" height="9" fill="#fff"/>
<use href="#tf" y="131" class="g"/><use href="#tw" y="131"/>
<use href="#uni" x="539" y="126"/>
<use href="#s42" x="599" y="126"/>
<use href="#s35" x="605" y="126"/>
<use href="#s4c" x="611" y="126"/>
<use href="#s41" x="617" y="126"/>
<use href="#s55" x="623" y="126"/>
<use href="#s39" x="629" y="126"/>
<rect x="71" y="141" width="31" height="3" fill="#00a000"/>
<rect x="102" y="142" width="2" height="1" fill="#00a000"/>
<rect x="104" y="141" width="416" height="3" fill="#00a000"/>
<rect x="70" y="138" width="1" height="9" fill="#fff"/>
<use href="#tf" y="142" class="g"/><use href="#tw" y="142"/>
<rect x="112" y="144" width="1" height="2" fill="#ffff88"/>
<rect x="111" y="146" width="3" height="2" fill="#ffff88"/>
<use href="#uni" x="539" y="137"/>
<use href="#s41" x="599" y="137"/>
<use href="#s35" x="605" y="137"/>
<use href="#s41" x="611" y="137"/>
<use href="#s37" x="617" y="137"/>
<use href="#s50" x="623" y="137"/>
<use href="#s37" x="629" y="137"/>
<rect x="10" y="152" width="60" height="3" fill="#000032"/>
<rect x="526" y="152" width="13" height="3" fill="#000032"/>
<rect x="71" y="152" width="449" height="3" fill="#00a000"/>
<rect x="70" y="149" width="1" height="9" fill="#fff"/>
<use href="#tf" y="153" class="g"/><use href="#tw" y="153"/>
<use href="#uni" x="539" y="148"/>
<use href="#s51" x="599" y="148"/>
<use href="#s39" x="605" y="148"/>
<use href="#s46" x="611" y="148"/>
<use href="#s50" x="617" y="148"/>
<use href="#s55" x="623" y="148"/>
<use href="#s30" x="629" y="148"/>
<rect x="71" y="163" width="449" height="3" fill="#00a000"/>
<rect x="70" y="160" width="1" height="9" fill="#fff"/>
<use href="#tf" y="164" class="g"/><use href="#tw" y="164"/>
<use href="#uni" x="539" y="159"/>
<use href="#s51" x="599" y="159"/>
<use href="#s36" x="605" y="159"/>
<use href="#s39" x="611" y="159"/>
<use href="#s42" x="617" y="159"/>
<use href="#s33" x="623" y="159"/>
<use href="#s32" x="629" y="159"/>
<rect x="10" y="174" width="60" height="3" fill="#000032"/>
<rect x="526" y="174" width="13" height="3" fill="#000032"/>
<rect x="71" y="174" width="449" height="3" fill="#00a000"/>
<rect x="70" y="171" width="1" height="9" fill="#fff"/>
<use href="#tf" y="175" class="g"/><use href="#tw" y="175"/>
<use href="#uni" x="539" y="170"/>
<use href="#s42" x="599" y="170"/>
<use href="#s39" x="605" y="170"/>
<use href="#s48" x="611" y="170"/>
<use href="#s59" x="617" y="170"/>
<use href="#s38" x="623" y="170"/>
<use href="#s37" x="629" y="170"/>
<rect x="71" y="185" width="449" height="3" fill="#00a000"/>
<rect x="70" y="182" width="1" height="9" fill="#fff"/>
<use href="#tf" y="186" class="g"/><use href="#tw" y="186"/>
<use href="#uni" x="539" y="181"/>
<use href="#s42" x="599" y="181"/>
<use href="#s39" x="605" y="181"/>
<use href="#s48" x="611" y="181"/>
<use href="#s59" x="617" y="181"/>
<use href="#s38" x="623" y="181"/>
<use href="#s35" x="629" y="181"/>
<rect x="10" y="196" width="60" height="3" fill="#000032"/>
<rect x="526" y="196" width="13" height="3" fill="#000032"/>
<rect x="71" y="196" width="449" height="3" fill="#00a000"/>
<rect x="70" y="193" width="1" height="9" fill="#fff"/>
<use href="#tf" y="197" class="g"/><use href="#tw" y="197"/>
<rect x="112" y="199" width="1" height="2" fill="#ffff88"/>
<rect x="111" y="201" width="3" height="2" fill="#ffff88"/>
<use href="#uni" x="539" y="192"/>
<use href="#s41" x="599" y="192"/>
<use href="#s37" x="605" y="192"/>
<use href="#s50" x="611" y="192"/>
<use href="#s55" x="617" y="192"/>
<use href="#s34" x="623" y="192"/>
<use href="#s38" x="629" y="192"/>
<rect x="71" y="207" width="449" height="3" fill="#00a000"/>
<rect x="70" y="204" width="1" height="9" fill="#fff"/>
<use href="#tf" y="208" class="g"/><use href="#tw" y="208"/>
<use href="#uni" x="539" y="203"/>
<use href="#s51" x="599" y="203"/>
<use href="#s39" x="605" y="203"/>
<use href="#s53" x="611" y="203"/>
<use href="#s50" x="617" y="203"/>
<use href="#s4a" x="623" y="203"/>
<use href="#s31" x="629" y="203"/>
<rect x="10" y="218" width="60" height="3" fill="#000032"/>
<rect x="526" y="218" width="13" height="3" fill="#000032"/>
<rect x="71" y="218" width="449" height="3" fill="#00a000"/>
<rect x="70" y="215" width="1" height="9" fill="#fff"/>
<use href="#tf" y="219" class="g"/><use href="#tw" y="219"/>
<use href="#uni" x="539" y="214"/>
<use href="#s41" x="599" y="214"/>
<use href="#s39" x="605" y="214"/>
<use href="#s50" x="611" y="214"/>
<use href="#s46" x="617" y="214"/>
<use href="#s30" x="623" y="214"/>
<use href="#s32" x="629" y="214"/>
<rect x="71" y="229" width="449" height="3" fill="#00a000"/>
<rect x="70" y="226" width="1" height="9" fill="#fff"/>
<use href="#tf" y="230" class="g"/><use href="#tw" y="230"/>
<use href="#uni" x="539" y="225"/>
<use href="#s43" x="599" y="225"/>
<use href="#s36" x="605" y="225"/>
<use href="#s54" x="611" y="225"/>
<use href="#s41" x="617" y="225"/>
<use href="#s39" x="623" y="225"/>
<use href="#s31" x="629" y="225"/>
<rect x="10" y="240" width="60" height="3" fill="#000032"/>
<rect x="526" y="240" width="13" height="3" fill="#000032"/>
<rect x="71" y="240" width="74" height="3" fill="#00a000"/>
<rect x="145" y="241" width="2" height="1" fill="#00a000"/>
<rect x="147" y="240" width="373" height="3" fill="#00a000"/>
<rect x="70" y="237" width="1" height="9" fill="#fff"/>
<use href="#tf" y="241" class="g"/><use href="#tw" y="241"/>
<use href="#uni" x="539" y="236"/>
<use href="#s51" x="599" y="236"/>
<use href="#s39" x="605" y="236"/>
<use href="#s53" x="611" y="236"/>
<use href="#s45" x="617" y="236"/>
<use href="#s58" x="623" y="236"/>
<use href="#s36" x="629" y="236"/>
<rect x="71" y="251" width="74" height="3" fill="#00a000"/>
<rect x="145" y="252" width="2" height="1" fill="#00a000"/>
<rect x="147" y="251" width="373" height="3" fill="#00a000"/>
<rect x="70" y="248" width="1" height="9" fill="#fff"/>
<use href="#tf" y="252" class="g"/><use href="#tw" y="252"/>
<use href="#uni" x="539" y="247"/>
<use href="#s50" x="599" y="247"/>
<use href="#s30" x="605" y="247"/>
<use href="#s38" x="611" y="247"/>
<use href="#s32" x="617" y="247"/>
<use href="#s38" x="623" y="247"/>
<use href="#s31" x="629" y="247"/>
<rect x="10" y="262" width="60" height="3" fill="#000032"/>
<rect x="526" y="262" width="13" height="3" fill="#000032"/>
<rect x="71" y="262" width="449" height="3" fill="#00a000"/>
<rect x="70" y="259" width="1" height="9" fill="#fff"/>
<use href="#tf" y="263" class="g"/><use href="#tw" y="263"/>
<use href="#uni" x="539" y="258"/>
<use href="#s4f" x="599" y="258"/>
<use href="#s32" x="605" y="258"/>
<use href="#s32" x="611" y="258"/>
<use href="#s35" x="617" y="258"/>
<use href="#s30" x="623" y="258"/>
<use href="#s36" x="629" y="258"/>
<rect x="71" y="273" width="42" height="3" fill="#00a000"/>
<rect x="113" y="274" width="5" height="1" fill="#00a000"/>
<rect x="118" y="273" width="25" height="3" fill="#00a000"/>
<rect x="143" y="274" width="4" height="1" fill="#00a000"/>
<rect x="147" y="273" width="373" height="3" fill="#00a000"/>
<rect x="70" y="270" width="1" height="9" fill="#fff"/>
<use href="#tf" y="274" class="g"/><use href="#tw" y="274"/>
<rect x="101" y="276" width="1" height="2" fill="#ffff88"/>
<rect x="100" y="278" width="3" height="2" fill="#ffff88"/>
<use href="#uni" x="539" y="269"/>
<use href="#s50" x="599" y="269"/>
<use href="#s31" x="605" y="269"/>
<use href="#s35" x="611" y="269"/>
<use href="#s31" x="617" y="269"/>
<use href="#s30" x="623" y="269"/>
<use href="#s32" x="629" y="269"/>
<rect x="10" y="284" width="60" height="3" fill="#000032"/>
<rect x="526" y="284" width="13" height="3" fill="#000032"/>
<rect x="71" y="284" width="449" height="3" fill="#00a000"/>
<rect x="70" y="281" width="1" height="9" fill="#fff"/>
<use href="#tf" y="285" class="g"/><use href="#tw" y="285"/>
<use href="#uni" x="539" y="280"/>
<use href="#s51" x="599" y="280"/>
<use href="#s39" x="605" y="280"/>
<use href="#s35" x="611" y="280"/>
<use href="#s41" x="617" y="280"/>
<use href="#s47" x="623" y="280"/>
<use href="#s31" x="629" y="280"/>
<rect x="71" y="295" width="449" height="3" fill="#00a000"/>
<rect x="70" y="292" width="1" height="9" fill="#fff"/>
<use href="#tf" y="296" class="g"/><use href="#tw" y="296"/>
<use href="#uni" x="539" y="291"/>
<use href="#s43" x="599" y="291"/>
<use href="#s36" x="605" y="291"/>
<use href="#s54" x="611" y="291"/>
<use href="#s4e" x="617" y="291"/>
<use href="#s4d" x="623" y="291"/>
<use href="#s38" x="629" y="291"/>
<rect x="10" y="306" width="60" height="3" fill="#000032"/>
<rect x="526" y="306" width="13" height="3" fill="#000032"/>
<rect x="71" y="306" width="74" height="3" fill="#00a000"/>
<rect x="145" y="307" width="2" height="1" fill="#00a000"/>
<rect x="147" y="306" width="12" height="3" fill="#00a000"/>
<rect x="159" y="307" width="5" height="1" fill="#00a000"/>
<rect x="164" y="306" width="356" height="3" fill="#00a000"/>
<rect x="70" y="303" width="1" height="9" fill="#fff"/>
<use href="#tf" y="307" class="g"/><use href="#tw" y="307"/>
<use href="#uni" x="539" y="302"/>
<use href="#s51" x="599" y="302"/>
<use href="#s38" x="605" y="302"/>
<use href="#s34" x="611" y="302"/>
<use href="#s55" x="617" y="302"/>
<use href="#s43" x="623" y="302"/>
<use href="#s31" x="629" y="302"/>
<rect x="71" y="317" width="74" height="3" fill="#00a000"/>
<rect x="145" y="318" width="2" height="1" fill="#00a000"/>
<rect x="147" y="317" width="12" height="3" fill="#00a000"/>
<rect x="159" y="318" width="5" height="1" fill="#00a000"/>
<rect x="164" y="317" width="356" height="3" fill="#00a000"/>
<rect x="70" y="314" width="1" height="9" fill="#fff"/>
<use href="#tf" y="318" class="g"/><use href="#tw" y="318"/>
<use href="#uni" x="539" y="313"/>
<use href="#s42" x="599" y="313"/>
<use href="#s37" x="605" y="313"/>
<use href="#s46" x="611" y="313"/>
<use href="#s4a" x="617" y="313"/>
<use href="#s45" x="623" y="313"/>
<use href="#s36" x="629" y="313"/>
<rect x="10" y="328" width="60" height="3" fill="#000032"/>
<rect x="526" y="328" width="13" height="3" fill="#000032"/>
<rect x="71" y="328" width="449" height="3" fill="#00a000"/>
<rect x="70" y="325" width="1" height="9" fill="#fff"/>
<use href="#tf" y="329" class="g"/><use href="#tw" y="329"/>
<rect x="112" y="331" width="1" height="2" fill="#ffff88"/>
<rect x="111" y="333" width="3" height="2" fill="#ffff88"/>
<use href="#uni" x="539" y="324"/>
<use href="#s41" x="599" y="324"/>
<use href="#s35" x="605" y="324"/>
<use href="#s42" x="611" y="324"/>
<use href="#s56" x="617" y="324"/>
<use href="#s35" x="623" y="324"/>
<use href="#s35" x="629" y="324"/>
<rect x="71" y="339" width="449" height="3" fill="#00a000"/>
<rect x="70" y="336" width="1" height="9" fill="#fff"/>
<use href="#tf" y="340" class="g"/><use href="#tw" y="340"/>
<use href="#uni" x="539" y="335"/>
<use href="#s51" x="599" y="335"/>
<use href="#s39" x="605" y="335"/>
<use href="#s53" x="611" y="335"/>
<use href="#s54" x="617" y="335"/>
<use href="#s41" x="623" y="335"/>
<use href="#s30" x="629" y="335"/>
<rect x="10" y="350" width="60" height="3" fill="#000032"/>
<rect x="526" y="350" width="13" height="3" fill="#000032"/>
<rect x="71" y="350" width="74" height="3" fill="#00a000"/>
<rect x="145" y="351" width="2" height="1" fill="#00a000"/>
<rect x="147" y="350" width="12" height="3" fill="#00a000"/>
<rect x="159" y="351" width="5" height="1" fill="#00a000"/>
<rect x="164" y="350" width="356" height="3" fill="#00a000"/>
<rect x="70" y="347" width="1" height="9" fill="#fff"/>
<use href="#tf" y="351" class="g"/><use href="#tw" y="351"/>
<use href="#uni" x="539" y="346"/>
<use href="#s51" x="599" y="346"/>
<use href="#s39" x="605" y="346"/>
<use href="#s58" x="611" y="346"/>
<use href="#s51" x="617" y="346"/>
<use href="#s39" x="623" y="346"/>
<use href="#s34" x="629" y="346"/>
<rect x="71" y="361" width="449" height="3" fill="#00a000"/>
<rect x="70" y="358" width="1" height="9" fill="#fff"/>
<use href="#tf" y="362" class="g"/><use href="#tw" y="362"/>
<use href="#uni" x="539" y="357"/>
<use href="#s41" x="599" y="357"/>
<use href="#s37" x="605" y="357"/>
<use href="#s4e" x="611" y="357"/>
<use href="#s57" x="617" y="357"/>
<use href="#s44" x="623" y="357"/>
<use href="#s38" x="629" y="357"/>
<rect x="10" y="372" width="60" height="3" fill="#000032"/>
<rect x="526" y="372" width="13" height="3" fill="#000032"/>
<rect x="71" y="372" width="44" height="3" fill="#00a000"/>
<rect x="115" y="373" width="3" height="1" fill="#00a000"/>
<rect x="118" y="372" width="402" height="3" fill="#00a000"/>
<rect x="70" y="369" width="1" height="9" fill="#fff"/>
<use href="#tf" y="373" class="g"/><use href="#tw" y="373"/>
<use href="#uni" x="539" y="368"/>
<use href="#s41" x="599" y="368"/>
<use href="#s31" x="605" y="368"/>
<use href="#s59" x="611" y="368"/>
<use href="#s59" x="617" y="368"/>
<use href="#s50" x="623" y="368"/>
<use href="#s37" x="629" y="368"/>
<rect x="71" y="383" width="74" height="3" fill="#00a000"/>
<rect x="145" y="384" width="2" height="1" fill="#00a000"/>
<rect x="147" y="383" width="373" height="3" fill="#00a000"/>
<rect x="70" y="380" width="1" height="9" fill="#fff"/>
<use href="#tf" y="384" class="g"/><use href="#tw" y="384"/>
<use href="#uni" x="539" y="379"/>
<use href="#s51" x="599" y="379"/>
<use href="#s38" x="605" y="379"/>
<use href="#s56" x="611" y="379"/>
<use href="#s57" x="617" y="379"/>
<use href="#s56" x="623" y="379"/>
<use href="#s33" x="629" y="379"/>
<rect x="10" y="394" width="60" height="3" fill="#000032"/>
<rect x="526" y="394" width="13" height="3" fill="#000032"/>
<rect x="71" y="394" width="74" height="3" fill="#00a000"/>
<rect x="145" y="395" width="2" height="1" fill="#00a000"/>
<rect x="147" y="394" width="373" height="3" fill="#00a000"/>
<rect x="70" y="391" width="1" height="9" fill="#fff"/>
<use href="#tf" y="395" class="g"/><use href="#tw" y="395"/>
<use href="#uni" x="539" y="390"/>
<use href="#s51" x="599" y="390"/>
<use href="#s38" x="605" y="390"/>
<use href="#s47" x="611" y="390"/>
<use href="#s54" x="617" y="390"/>
<use href="#s36" x="623" y="390"/>
<use href="#s31" x="629" y="390"/>
<rect x="71" y="405" width="74" height="3" fill="#00a000"/>
<rect x="145" y="406" width="2" height="1" fill="#00a000"/>
<rect x="147" y="405" width="373" height="3" fill="#00a000"/>
<rect x="70" y="402" width="1" height="9" fill="#fff"/>
<use href="#tf" y="406" class="g"/><use href="#tw" y="406"/>
<use href="#uni" x="539" y="401"/>
<use href="#s51" x="599" y="401"/>
<use href="#s35" x="605" y="401"/>
<use href="#s51" x="611" y="401"/>
<use href="#s4b" x="617" y="401"/>
<use href="#s51" x="623" y="401"/>
<use href="#s35" x="629" y="401"/>
<rect x="10" y="416" width="60" height="3" fill="#000032"/>
<rect x="526" y="416" width="13" height="3" fill="#000032"/>
<rect x="71" y="416" width="74" height="3" fill="#00a000"/>
<rect x="145" y="417" width="2" height="1" fill="#00a000"/>
<rect x="147" y="416" width="373" height="3" fill="#00a000"/>
<rect x="70" y="413" width="1" height="9" fill="#fff"/>
<use href="#tf" y="417" class="g"/><use href="#tw" y="417"/>
<use href="#uni" x="539" y="412"/>
<use href="#s51" x="599" y="412"/>
<use href="#s34" x="605" y="412"/>
<use href="#s4b" x="611" y="412"/>
<use href="#s50" x="617" y="412"/>
<use href="#s32" x="623" y="412"/>
<use href="#s32" x="629" y="412"/>
<rect x="71" y="427" width="24" height="3" fill="#00a000"/>
<rect x="95" y="428" width="3" height="1" fill="#00a000"/>
<rect x="98" y="427" width="422" height="3" fill="#00a000"/>
<rect x="70" y="424" width="1" height="9" fill="#fff"/>
<use href="#tf" y="428" class="g"/><use href="#tw" y="428"/>
<rect x="112" y="430" width="1" height="2" fill="#ffff88"/>
<rect x="111" y="432" width="3" height="2" fill="#ffff88"/>
<use href="#uni" x="539" y="423"/>
<use href="#s51" x="599" y="423"/>
<use href="#s33" x="605" y="423"/>
<use href="#s4c" x="611" y="423"/>
<use href="#s30" x="617" y="423"/>
<use href="#s54" x="623" y="423"/>
<use href="#s39" x="629" y="423"/>
<rect x="10" y="438" width="60" height="3" fill="#000032"/>
<rect x="526" y="438" width="13" height="3" fill="#000032"/>
<rect x="71" y="438" width="449" height="3" fill="#00a000"/>
<rect x="70" y="435" width="1" height="9" fill="#fff"/>
<use href="#tf" y="439" class="g"/><use href="#tw" y="439"/>
<use href="#uni" x="539" y="434"/>
<use href="#s51" x="599" y="434"/>
<use href="#s38" x="605" y="434"/>
<use href="#s47" x="611" y="434"/>
<use href="#s55" x="617" y="434"/>
<use href="#s5a" x="623" y="434"/>
<use href="#s36" x="629" y="434"/>
<rect x="71" y="449" width="449" height="3" fill="#00a000"/>
<rect x="70" y="446" width="1" height="9" fill="#fff"/>
<use href="#tf" y="450" class="g"/><use href="#tw" y="450"/>
<use href="#uni" x="539" y="445"/>
<use href="#s51" x="599" y="445"/>
<use href="#s38" x="605" y="445"/>
<use href="#s47" x="611" y="445"/>
<use href="#s55" x="617" y="445"/>
<use href="#s5a" x="623" y="445"/>
<use href="#s35" x="629" y="445"/>
<rect x="10" y="460" width="60" height="3" fill="#000032"/>
<rect x="526" y="460" width="13" height="3" fill="#000032"/>
<rect x="71" y="460" width="74" height="3" fill="#00a000"/>
<rect x="145" y="461" width="2" height="1" fill="#00a000"/>
<rect x="147" y="460" width="373" height="3" fill="#00a000"/>
<rect x="70" y="457" width="1" height="9" fill="#fff"/>
<use href="#tf" y="461" class="g"/><use href="#tw" y="461"/>
<use href="#uni" x="539" y="456"/>
<use href="#s51" x="599" y="456"/>
<use href="#s35" x="605" y="456"/>
<use href="#s51" x="611" y="456"/>
<use href="#s4b" x="617" y="456"/>
<use href="#s51" x="623" y="456"/>
<use href="#s36" x="629" y="456"/>
<rect x="71" y="471" width="41" height="3" fill="#00a000"/>
<rect x="112" y="472" width="6" height="1" fill="#00a000"/>
<rect x="118" y="471" width="402" height="3" fill="#00a000"/>
<rect x="70" y="468" width="1" height="9" fill="#fff"/>
<use href="#tf" y="472" class="g"/><use href="#tw" y="472"/>
<rect x="103" y="474" width="1" height="2" fill="#ffff88"/>
<rect x="102" y="476" width="3" height="2" fill="#ffff88"/>
<use href="#uni" x="539" y="467"/>
<use href="#s42" x="599" y="467"/>
<use href="#s32" x="605" y="467"/>
<use href="#s43" x="611" y="467"/>
<use href="#s5a" x="617" y="467"/>
<use href="#s41" x="623" y="467"/>
<use href="#s38" x="629" y="467"/>
<rect x="10" y="482" width="60" height="3" fill="#000032"/>
<rect x="526" y="482" width="13" height="3" fill="#000032"/>
<rect x="71" y="482" width="449" height="3" fill="#00a000"/>
<rect x="70" y="479" width="1" height="9" fill="#fff"/>
<use href="#tf" y="483" class="g"/><use href="#tw" y="483"/>
<use href="#uni" x="539" y="478"/>
<use href="#s51" x="599" y="478"/>
<use href="#s39" x="605" y="478"/>
<use href="#s58" x="611" y="478"/>
<use href="#s46" x="617" y="478"/>
<use href="#s4a" x="623" y="478"/>
<use href="#s31" x="629" y="478"/>
<rect x="71" y="493" width="51" height="3" fill="#00a000"/>
<rect x="122" y="494" width="10" height="1" fill="#00a000"/>
<rect x="132" y="493" width="388" height="3" fill="#00a000"/>
<rect x="70" y="490" width="1" height="9" fill="#fff"/>
<use href="#tf" y="494" class="g"/><use href="#tw" y="494"/>
<rect x="111" y="496" width="1" height="2" fill="#ffff88"/>
<rect x="110" y="498" width="3" height="2" fill="#ffff88"/>
<use href="#uni" x="539" y="489"/>
<use href="#s51" x="599" y="489"/>
<use href="#s37" x="605" y="489"/>
<use href="#s35" x="611" y="489"/>
<use href="#s51" x="617" y="489"/>
<use href="#s4e" x="623" y="489"/>
<use href="#s34" x="629" y="489"/>
<rect x="10" y="504" width="60" height="3" fill="#000032"/>
<rect x="526" y="504" width="13" height="3" fill="#000032"/>
<rect x="71" y="504" width="51" height="3" fill="#a820a8"/>
<rect x="122" y="505" width="10" height="1" fill="#a820a8"/>
<rect x="132" y="504" width="388" height="3" fill="#a820a8"/>
<rect x="70" y="501" width="1" height="9" fill="#fff"/>
<use href="#tf" y="505" class="p"/><use href="#tw" y="505"/>
<rect x="101" y="507" width="1" height="2" fill="#ffff88"/>
<rect x="100" y="509" width="3" height="2" fill="#ffff88"/>
<use href="#uni" x="539" y="500"/>
<use href="#s51" x="599" y="500"/>
<use href="#s37" x="605" y="500"/>
<use href="#s35" x="611" y="500"/>
<use href="#s51" x="617" y="500"/>
<use href="#s4e" x="623" y="500"/>
<use href="#s33" x="629" y="500"/>
<rect x="71" y="515" width="51" height="3" fill="#00a000"/>
<rect x="122" y="516" width="10" height="1" fill="#00a000"/>
<rect x="132" y="515" width="388" height="3" fill="#00a000"/>
<rect x="70" y="512" width="1" height="9" fill="#fff"/>
<use href="#tf" y="516" class="g"/><use href="#tw" y="516"/>
<rect x="94" y="518" width="1" height="2" fill="#ffff88"/>
<rect x="93" y="520" width="3" height="2" fill="#ffff88"/>
<use href="#uni" x="539" y="511"/>
<use href="#s42" x="599" y="511"/>
<use href="#s37" x="605" y="511"/>
<use href="#s45" x="611" y="511"/>
<use href="#s38" x="617" y="511"/>
<use href="#s59" x="623" y="511"/>
<use href="#s38" x="629" y="511"/>
<rect x="10" y="526" width="60" height="3" fill="#000032"/>
<rect x="526" y="526" width="13" height="3" fill="#000032"/>
<rect x="71" y="526" width="51" height="3" fill="#00a000"/>
<rect x="122" y="527" width="10" height="1" fill="#00a000"/>
<rect x="132" y="526" width="388" height="3" fill="#00a000"/>
<rect x="70" y="523" width="1" height="9" fill="#fff"/>
<use href="#tf" y="527" class="g"/><use href="#tw" y="527"/>
<rect x="94" y="529" width="1" height="2" fill="#ffff88"/>
<rect x="93" y="531" width="3" height="2" fill="#ffff88"/>
<use href="#uni" x="539" y="522"/>
<use href="#s50" x="599" y="522"/>
<use href="#s31" x="605" y="522"/>
<use href="#s34" x="611" y="522"/>
<use href="#s36" x="617" y="522"/>
<use href="#s35" x="623" y="522"/>
<use href="#s35" x="629" y="522"/>
<rect x="71" y="537" width="51" height="3" fill="#00a000"/>
<rect x="122" y="538" width="10" height="1" fill="#00a000"/>
<rect x="132" y="537" width="388" height="3" fill="#00a000"/>
<rect x="70" y="534" width="1" height="9" fill="#fff"/>
<use href="#tf" y="538" class="g"/><use href="#tw" y="538"/>
<rect x="112" y="540" width="1" height="2" fill="#ffff88"/>
<rect x="111" y="542" width="3" height="2" fill="#ffff88"/>
<use href="#uni" x="539" y="533"/>
<use href="#s51" x="599" y="533"/>
<use href="#s34" x="605" y="533"/>
<use href="#s35" x="611" y="533"/>
<use href="#s4e" x="617" y="533"/>
<use href="#s42" x="623" y="533"/>
<use href="#s33" x="629" y="533"/>
<rect x="10" y="548" width="60" height="3" fill="#000032"/>
<rect x="526" y="548" width="13" height="3" fill="#000032"/>
<rect x="71" y="548" width="51" height="3" fill="#00a000"/>
<rect x="122" y="549" width="10" height="1" fill="#00a000"/>
<rect x="132" y="548" width="388" height="3" fill="#00a000"/>
<rect x="70" y="545" width="1" height="9" fill="#fff"/>
<use href="#tf" y="549" class="g"/><use href="#tw" y="549"/>
<rect x="112" y="551" width="1" height="2" fill="#ffff88"/>
<rect x="111" y="553" width="3" height="2" fill="#ffff88"/>
<use href="#uni" x="539" y="544"/>
<use href="#s51" x="599" y="544"/>
<use href="#s34" x="605" y="544"/>
<use href="#s35" x="611" y="544"/>
<use href="#s4e" x="617" y="544"/>
<use href="#s42" x="623" y="544"/>
<use href="#s32" x="629" y="544"/>
<rect x="71" y="559" width="51" height="3" fill="#00a000"/>
<rect x="122" y="560" width="10" height="1" fill="#00a000"/>
<rect x="132" y="559" width="388" height="3" fill="#00a000"/>
<rect x="70" y="556" width="1" height="9" fill="#fff"/>
<use href="#tf" y="560" class="g"/><use href="#tw" y="560"/>
<rect x="112" y="562" width="1" height="2" fill="#ffff88"/>
<rect x="111" y="564" width="3" height="2" fill="#ffff88"/>
<use href="#uni" x="539" y="555"/>
<use href="#s43" x="599" y="555"/>
<use href="#s37" x="605" y="555"/>
<use href="#s44" x="611" y="555"/>
<use href="#s50" x="617" y="555"/>
<use href="#s4c" x="623" y="555"/>
<use href="#s34" x="629" y="555"/>
<rect x="10" y="570" width="60" height="3" fill="#000032"/>
<rect x="526" y="570" width="13" height="3" fill="#000032"/>
<rect x="71" y="570" width="51" height="3" fill="#00a000"/>
<rect x="122" y="571" width="10" height="1" fill="#00a000"/>
<rect x="132" y="570" width="388" height="3" fill="#00a000"/>
<rect x="70" y="567" width="1" height="9" fill="#fff"/>
<use href="#tf" y="571" class="g"/><use href="#tw" y="571"/>
<rect x="112" y="573" width="1" height="2" fill="#ffff88"/>
<rect x="111" y="575" width="3" height="2" fill="#ffff88"/>
<use href="#uni" x="539" y="566"/>
<use href="#s43" x="599" y="566"/>
<use href="#s37" x="605" y="566"/>
<use href="#s44" x="611" y="566"/>
<use href="#s50" x="617" y="566"/>
<use href="#s4c" x="623" y="566"/>
<use href="#s30" x="629" y="566"/>
<rect x="71" y="581" width="4" height="3" fill="#00a000"/>
<rect x="75" y="582" width="5" height="1" fill="#00a000"/>
<rect x="80" y="581" width="15" height="3" fill="#00a000"/>
<rect x="95" y="582" width="8" height="1" fill="#00a000"/>
<rect x="103" y="581" width="20" height="3" fill="#00a000"/>
<rect x="123" y="582" width="4" height="1" fill="#00a000"/>
<rect x="127" y="581" width="393" height="3" fill="#00a000"/>
<rect x="70" y="578" width="1" height="9" fill="#fff"/>
<use href="#tf" y="582" class="g"/><use href="#tw" y="582"/>
<use href="#uni" x="539" y="577"/>
<use href="#s42" x="599" y="577"/>
<use href="#s34" x="605" y="577"/>
<use href="#s46" x="611" y="577"/>
<use href="#s54" x="617" y="577"/>
<use href="#s32" x="623" y="577"/>
<use href="#s38" x="629" y="577"/>
<rect x="10" y="592" width="60" height="3" fill="#000032"/>
<rect x="526" y="592" width="13" height="3" fill="#000032"/>
<rect x="71" y="592" width="4" height="3" fill="#00a000"/>
<rect x="75" y="593" width="5" height="1" fill="#00a000"/>
<rect x="80" y="592" width="15" height="3" fill="#00a000"/>
<rect x="95" y="593" width="8" height="1" fill="#00a000"/>
<rect x="103" y="592" width="20" height="3" fill="#00a000"/>
<rect x="123" y="593" width="4" height="1" fill="#00a000"/>
<rect x="127" y="592" width="393" height="3" fill="#00a000"/>
<rect x="70" y="589" width="1" height="9" fill="#fff"/>
<use href="#tf" y="593" class="g"/><use href="#tw" y="593"/>
<use href="#uni" x="539" y="588"/>
<use href="#s42" x="599" y="588"/>
<use href="#s34" x="605" y="588"/>
<use href="#s46" x="611" y="588"/>
<use href="#s4d" x="617" y="588"/>
<use href="#s58" x="623" y="588"/>
<use href="#s34" x="629" y="588"/>
<rect x="71" y="603" width="4" height="3" fill="#00a000"/>
<rect x="75" y="604" width="5" height="1" fill="#00a000"/>
<rect x="80" y="603" width="15" height="3" fill="#00a000"/>
<rect x="95" y="604" width="8" height="1" fill="#00a000"/>
<rect x="103" y="603" width="20" height="3" fill="#00a000"/>
<rect x="123" y="604" width="4" height="1" fill="#00a000"/>
<rect x="127" y="603" width="393" height="3" fill="#00a000"/>
<rect x="70" y="600" width="1" height="9" fill="#fff"/>
<use href="#tf" y="604" class="g"/><use href="#tw" y="604"/>
<use href="#uni" x="539" y="599"/>
<use href="#s50" x="599" y="599"/>
<use href="#s32" x="605" y="599"/>
<use href="#s35" x="611" y="599"/>
<use href="#s34" x="617" y="599"/>
<use href="#s36" x="623" y="599"/>
<use href="#s32" x="629" y="599"/>
<rect x="10" y="614" width="60" height="3" fill="#000032"/>
<rect x="526" y="614" width="13" height="3" fill="#000032"/>
<rect x="71" y="614" width="51" height="3" fill="#00a000"/>
<rect x="122" y="615" width="10" height="1" fill="#00a000"/>
<rect x="132" y="614" width="388" height="3" fill="#00a000"/>
<rect x="70" y="611" width="1" height="9" fill="#fff"/>
<use href="#tf" y="615" class="g"/><use href="#tw" y="615"/>
<rect x="112" y="617" width="1" height="2" fill="#ffff88"/>
<rect x="111" y="619" width="3" height="2" fill="#ffff88"/>
<use href="#uni" x="539" y="610"/>
<use href="#s51" x="599" y="610"/>
<use href="#s34" x="605" y="610"/>
<use href="#s35" x="611" y="610"/>
<use href="#s4e" x="617" y="610"/>
<use href="#s42" x="623" y="610"/>
<use href="#s34" x="629" y="610"/>
<rect x="294" y="625" width="226" height="3" fill="#00c4c8"/>
<rect x="293" y="622" width="1" height="9" fill="#fff"/>
<use href="#tf" y="626" class="c"/><use href="#tw" y="626"/>
<use href="#uni" x="539" y="621"/>
<use href="#s50" x="599" y="621"/>
<use href="#s31" x="605" y="621"/>
<use href="#s33" x="611" y="621"/>
<use href="#s35" x="617" y="621"/>
<use href="#s36" x="623" y="621"/>
<use href="#s34" x="629" y="621"/>
<rect x="10" y="636" width="347" height="3" fill="#000032"/>
<rect x="526" y="636" width="13" height="3" fill="#000032"/>
<rect x="358" y="636" width="162" height="3" fill="#00c4c8"/>
<rect x="357" y="633" width="1" height="9" fill="#fff"/>
<use href="#tf" y="637" class="c"/><use href="#tw" y="637"/>
<use href="#uni" x="539" y="632"/>
<use href="#s42" x="599" y="632"/>
<use href="#s36" x="605" y="632"/>
<use href="#s54" x="611" y="632"/>
<use href="#s45" x="617" y="632"/>
<use href="#s34" x="623" y="632"/>
<use href="#s33" x="629" y="632"/>
<use href="#s4c" x="10" y="651"/>
<use href="#s61" x="16" y="651"/>
<use href="#s72" x="22" y="651"/>
<use href="#s67" x="28" y="651"/>
<use href="#s65" x="34" y="651"/>
<use href="#s67" x="46" y="651"/>
<use href="#s61" x="52" y="651"/>
<use href="#s70" x="58" y="651"/>
<use href="#s73" x="64" y="651"/>
<use href="#s3a" x="70" y="651"/>
<rect x="82" y="652" width="1" height="2" fill="#ffff88"/>
<rect x="81" y="654" width="3" height="3" fill="#ffff88"/>
<rect x="80" y="657" width="5" height="2" fill="#ffff88"/>
<use href="#s28" x="88" y="651"/>
<use href="#s69" x="94" y="651"/>
<use href="#s6e" x="100" y="651"/>
<use href="#s51" x="112" y="651"/>
<use href="#s75" x="118" y="651"/>
<use href="#s65" x="124" y="651"/>
<use href="#s72" x="130" y="651"/>
<use href="#s79" x="136" y="651"/>
<use href="#s29" x="142" y="651"/>
<use href="#s2f" x="148" y="651"/>
<rect x="155" y="655" width="6" height="1" fill="#00c4c8"/>
<use href="#s28" x="166" y="651"/>
<use href="#s69" x="172" y="651"/>
<use href="#s6e" x="178" y="651"/>
<use href="#s53" x="190" y="651"/>
<use href="#s75" x="196" y="651"/>
<use href="#s62" x="202" y="651"/>
<use href="#s6a" x="208" y="651"/>
<use href="#s65" x="214" y="651"/>
<use href="#s63" x="220" y="651"/>
<use href="#s74" x="226" y="651"/>
<use href="#s29" x="232" y="651"/>
<rect x="456" y="651" width="1" height="9" fill="#3c3900"/>
<rect x="474" y="651" width="1" height="9" fill="#3c3900"/>
<rect x="457" y="654" width="17" height="3" fill="#00c4c8"/>
<use href="#s3d" x="478" y="651"/>
<use href="#s35" x="484" y="651"/>
<use href="#s30" x="490" y="651"/>
<use href="#s63" x="496" y="651"/>
<use href="#s68" x="502" y="651"/>
<use href="#s61" x="508" y="651"/>
<use href="#s72" x="514" y="651"/>
<use href="#s2e" x="520" y="651"/>
</svg>
</body></html>
